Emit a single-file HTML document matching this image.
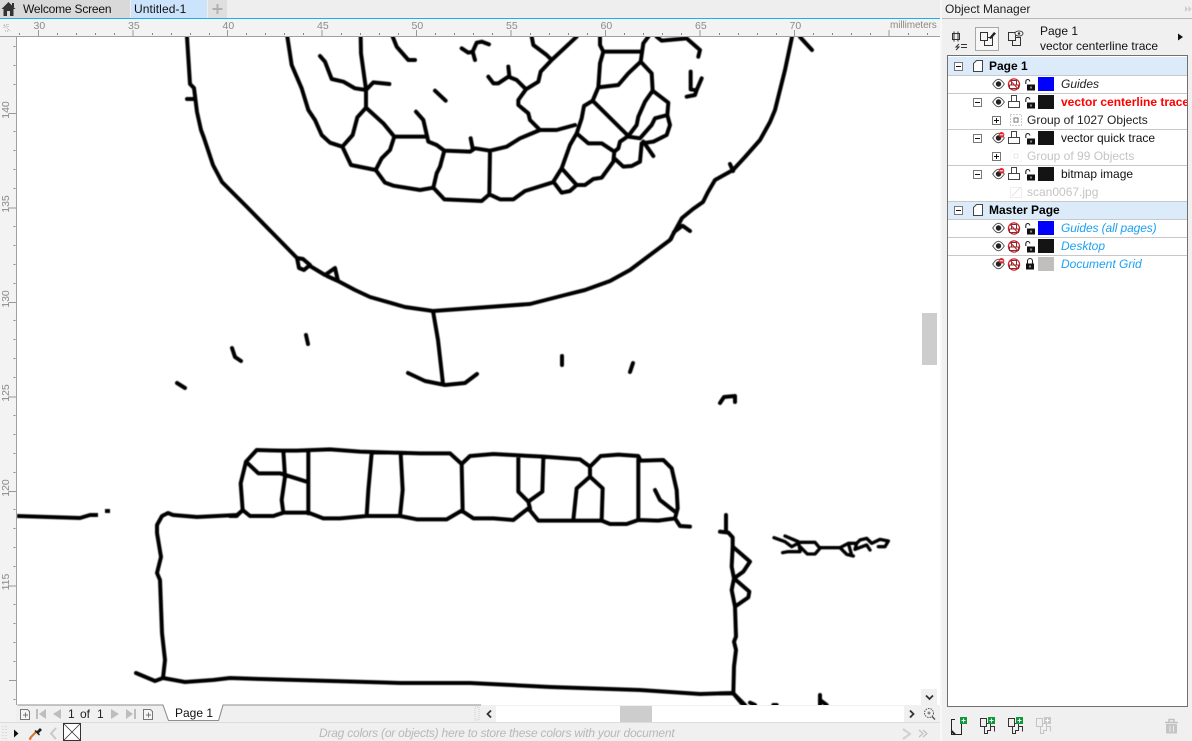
<!DOCTYPE html>
<html><head><meta charset="utf-8"><style>
html,body{margin:0;padding:0}
body{width:1192px;height:741px;overflow:hidden;background:#f0f0f0;position:relative;font:12px "Liberation Sans",sans-serif;color:#111}
.a{position:absolute;white-space:nowrap}
.t{position:absolute;white-space:nowrap;line-height:16px;height:16px}
.l{position:absolute;left:948px;width:239px;height:1px;background:#c8c8c8}
svg{position:absolute;left:0;top:0}
.rh{position:absolute;font-size:10.500px;color:#8a8a8a;top:20px;line-height:12px}
.rv{position:absolute;font-size:10.500px;color:#8a8a8a;left:-4px;width:20px;text-align:center;transform:rotate(-90deg);line-height:12px}
</style></head><body>
<!-- tab strip -->
<div class="a" style="left:0;top:0;width:942px;height:18px;background:#eeeeee"></div>
<div class="a" style="left:0;top:0;width:130px;height:18px;background:#d9d9d9"></div>
<div class="a" style="left:131px;top:0;width:76px;height:18px;background:#cbe3fb"></div>
<div class="a" style="left:208px;top:0;width:19px;height:18px;background:#dfdfdf"></div>
<div class="a" style="left:0;top:18px;width:942px;height:1px;background:#19aeee"></div>
<div class="t" style="left:23px;top:1px;letter-spacing:-.2px">Welcome Screen</div>
<div class="t" style="left:134px;top:1px;letter-spacing:.1px">Untitled-1</div>
<!-- rulers -->
<div class="a" style="left:0;top:19px;width:940px;height:17px;background:#f3f3f3"></div>
<div class="a" style="left:0;top:36px;width:940px;height:1px;background:#a0a0a0"></div>
<div class="a" style="left:16px;top:36px;width:1px;height:669px;background:#a0a0a0"></div>
<div class="a" style="left:0;top:37px;width:16px;height:685px;background:#f3f3f3"></div>
<div class="rh" style="left:33.500px">30</div><div class="rh" style="left:128px">35</div><div class="rh" style="left:222.500px">40</div><div class="rh" style="left:317px">45</div><div class="rh" style="left:411.500px">50</div><div class="rh" style="left:506px">55</div><div class="rh" style="left:600.500px">60</div><div class="rh" style="left:695px">65</div><div class="rh" style="left:789.500px">70</div>
<div class="rv" style="top:104px">140</div><div class="rv" style="top:198px">135</div><div class="rv" style="top:293px">130</div><div class="rv" style="top:387px">125</div><div class="rv" style="top:482px">120</div><div class="rv" style="top:576px">115</div>
<div class="a" style="left:890px;top:20px;font-size:10px;line-height:12px;color:#8f8a80;letter-spacing:-.1px">millimeters</div>
<!-- canvas -->
<div class="a" style="left:17px;top:37px;width:923px;height:668px;background:#fff"></div>

<svg width="1192" height="741" viewBox="0 0 1192 741" fill="none">
<defs>
<clipPath id="c"><rect x="17" y="37" width="904" height="668"/></clipPath>
<filter id="b" x="-2%" y="-2%" width="104%" height="104%"><feGaussianBlur stdDeviation="0.45"/></filter>
<g id="eye"><path d="M.7 6C3 2.500 5 1.200 6.500 1.200S10 2.500 12.300 6C10 9.500 8 10.800 6.500 10.800S3 9.500 .7 6Z" stroke="#555" fill="#fff"/><circle cx="6.500" cy="6" r="2.700" fill="#222"/></g>
<g id="eyeoff"><use href="#eye"/><circle cx="9.500" cy="2.800" r="2.800" fill="#e0202a"/><rect x="7.700" y="2.300" width="3.600" height="1" fill="#fff"/></g>
<g id="pr"><path d="M3.500 6.500V.5H8.500V6.500M.5 6.500H11.500V12.500H.5Z" stroke="#444" fill="#fff"/></g>
<g id="prno"><circle cx="6" cy="6.500" r="5.600" stroke="#d0202a" stroke-width="1.200"/><path d="M3.500 6.500V2.500H8.500V6.500M1.500 7H10.500V10.500H1.500Z" stroke="#7a3030"/><path d="M2.200 2.500L9.800 10.500" stroke="#d0202a" stroke-width="1.200"/></g>
<g id="lk"><path d="M.8 5V2.500A2 2 0 0 1 4.800 2.500" stroke="#222" stroke-width="1.100"/><rect x="2" y="5.500" width="8" height="6" fill="#111"/><rect x="5.500" y="7.500" width="1" height="2" fill="#fff"/></g>
<g id="lkc"><path d="M2.500 5.500V3A2.500 2.500 0 0 1 7.500 3V5.500" stroke="#222" stroke-width="1.100"/><rect x="1" y="5.500" width="8" height="6" fill="#111"/><rect x="4.500" y="7.500" width="1" height="2" fill="#fff"/></g>
<g id="minus"><rect x=".5" y=".5" width="8" height="8" stroke="#777" fill="#fff"/><path d="M2 4.500H7" stroke="#111"/></g>
<g id="plus"><rect x=".5" y=".5" width="8" height="8" stroke="#777" fill="#fff"/><path d="M2 4.500H7M4.500 2V7" stroke="#111"/></g>
<g id="pg"><path d="M3.500 .5H9.500V11.500H.5V3.500Z" stroke="#444" fill="#fff"/></g>
<g id="pgs"><path d="M.5 .5H7.500V8.500H.5ZM7.500 5.500H12.500V13.500H4.500V8.500" stroke="#333"/></g>
<g id="gplus"><rect width="7" height="7" fill="#0c9a3c"/><path d="M1.500 3.500H5.500M3.500 1.500V5.500" stroke="#fff"/></g>
</defs>

<!-- ruler ticks -->
<path d="M38.500 30V36M133 30V36M227.500 30V36M322 30V36M416.500 30V36M511 30V36M605.500 30V36M700 30V36M794.500 30V36M889 30V36" stroke="#999"/>
<path d="M19 34H20M57 34H58M76 34H77M95 34H96M114 34H115M152 34H153M171 34H172M190 34H191M209 34H210M246 34H247M265 34H266M284 34H285M303 34H304M341 34H342M360 34H361M379 34H380M398 34H399M435 34H436M454 34H455M473 34H474M492 34H493M530 34H531M549 34H550M568 34H569M587 34H588M624 34H625M643 34H644M662 34H663M681 34H682M719 34H720M738 34H739M757 34H758M776 34H777M813 34H814M832 34H833M851 34H852M870 34H871M908 34H909M927 34H928" stroke="#888" stroke-width="2"/>
<path d="M9 113.500H16M9 208H16M9 302.500H16M9 397H16M9 491.500H16M9 586H16M9 680.500H16" stroke="#999"/>
<path d="M14.500 46V47M14.500 65V66M14.500 84V85M14.500 131V132M14.500 150V151M14.500 169V170M14.500 188V189M14.500 226V227M14.500 245V246M14.500 264V265M14.500 283V284M14.500 320V321M14.500 339V340M14.500 358V359M14.500 377V378M14.500 415V416M14.500 434V435M14.500 453V454M14.500 472V473M14.500 509V510M14.500 528V529M14.500 547V548M14.500 566V567M14.500 604V605M14.500 623V624M14.500 642V643M14.500 661V662M14.500 699V700" stroke="#888" stroke-width="2"/>
<path d="M4 25L10 31M4 25H8M4 25V29M8 24V27M5 31H8" stroke="#aaa" stroke-dasharray="1 1"/>

<!-- home -->
<path d="M1.500 9L8.500 2L15.500 9H13.500V16H10V11H7V16H3.500V9Z" fill="#333"/><rect x="12" y="3" width="2" height="4" fill="#333"/>
<path d="M217.500 4V14M212.500 9H222.500" stroke="#b0b0b0" stroke-width="2"/>

<!-- drawing -->
<g clip-path="url(#c)"><g filter="url(#b)" stroke="#000" stroke-width="4" stroke-linejoin="round" stroke-linecap="round">
<path d="M187 37L190 84L194 88L197 112L201 130L204 138L213 165L222 182L247 207L297 258L303 259L310 265L304 270L299 268L297 258M310 266L325 275L335 268L338 281L327 276M338 281L355 290L370 297L405 307L433 311L530 304L565 295L585 290L610 281L630 270L670 240L682 218L693 209L703 202L708 192L715 180L733 170L745 157L760 140L770 122L775 110L785 70L792 37M187 99H195M730 164L733 171M671 239L674 232L682 226M683 226L690 231M800 37L812 50"/>
<path d="M433 311L438 340L442 375L443 384M408 373L425 381L445 385L465 383L477 374M232 348L235 357L241 361M306 335L308 344M177 383L185 388M562 356V365M633 363L630 372M720 403L724 397L735 396L735 402"/>
<path d="M17 516L80 518L90 515L98 515" stroke-linecap="butt"/><path d="M105 511H110" stroke-linecap="butt"/>
<g transform="translate(280 30) scale(.33333)" stroke-width="12">
<path d="M22 20L35 105L65 175L85 240L105 270L125 315L150 338L187 350L213 405L287 420M242 20L243 70L258 178V233L232 262L218 315L187 350M120 78L135 95L155 147L190 155L225 175L258 180L280 157L328 162M258 233L310 280L343 320L330 360L305 385L287 420L315 458L340 467L420 480L460 473M343 320H440M408 245L430 270L445 335L470 345L493 362L570 365L585 355L630 362L680 350L720 325L780 300H830L885 285M493 362L480 410L470 430L460 473L493 508L605 513L628 493M630 362L628 493L660 508H700L735 483L815 458M572 325L578 355M338 20L350 50L385 90H405M545 55L565 68L578 65L585 90M578 65L590 38L605 35L627 43M465 182L497 212M625 140L640 160H655L685 140L710 150L738 178L715 210V225L745 250L750 270L780 300M685 110L688 138M738 178L775 155L782 125L815 90L890 20M755 20L760 45L800 75L815 90M960 20V45L970 65L960 100L955 172L938 212L912 228L905 265L890 310M970 65H1082M1105 20L1090 40L1082 95L1115 130L1118 182L1095 215L1075 260L1070 285L1045 318M1082 95L1045 130L1015 165L955 172M1118 182L1165 218L1162 255L1125 265L1115 285L1080 325L1045 320M938 212L1045 318L1020 335L1015 355L1003 365L965 340H925L890 310M890 310L870 345L845 415L820 455L845 488L870 483L890 465H915L940 447L965 443L1000 395L1003 365M845 415L890 465M1003 385L1030 410L1055 408L1080 395L1085 340L1120 335L1160 315L1170 285L1162 255M1090 335L1120 378M1130 20L1145 32L1220 25L1260 60L1255 80M1232 125V178L1250 180L1265 145M1250 180L1245 195L1220 200"/>
</g>
<g transform="translate(230 440) scale(.33333)" stroke-width="12">
<path d="M0 228H20L38 210L32 130L48 65L80 30L155 32H200L300 28L390 35L570 40H660L695 72L720 48L790 42L940 50L1050 58L1080 80L1112 48L1165 44L1225 48L1232 62L1300 60L1325 85L1340 150L1343 205L1335 235L1350 258L1380 260M48 65L85 100H150L230 125M160 32L165 110L155 180L160 218M235 32V220M38 210L60 228H130L160 218H235L280 235H330L410 228H510L560 238H650L695 212L730 235H790L850 240L895 205L925 242H1115L1140 252H1190L1225 240L1285 242L1335 235M425 40L415 150L410 228M512 40L518 150L510 228M695 72L698 212M865 50V155L895 185L937 155L940 55M895 185L900 205M1080 80V110L1040 145L1030 240M1080 110L1118 145L1115 240M1225 58V240M1275 150L1290 180L1335 215"/>
</g>
<g transform="translate(720 510) scale(.33333)" stroke-width="12">
<path d="M18 15V65M0 65L25 68L38 82V110L90 155L70 185L42 205L35 170L38 110M42 205L88 245L85 262L45 290L35 240L42 205M45 290L48 380L42 395L48 420L42 470L40 550H0M40 550L65 580M90 578L105 585M160 585H170M300 555V585M300 570L320 585"/>
<path stroke-width="10" d="M162 83L195 95L215 110L240 97H285L300 115L285 132H262L240 110V125H205L188 128M195 78L235 95L240 120M300 113H360L385 100H410L420 90L440 85L455 100L480 88L505 93L495 110H475M360 113L380 133L400 138M385 100L395 135M410 100L405 118L440 105L450 120"/>
</g>
<path d="M237 515L197 517L173 515L168 513L162 516L157 525V533L161 557L157 573L160 580L162 633L165 660L163 678L155 681L136 673M163 678L185 682L213 680L230 678L260 679L400 683L470 683L550 687L640 690L700 694L733 693L745 705M237 515L243 510"/>
</g></g>

<!-- right scrollbar -->
<rect x="921" y="37" width="19" height="668" fill="#fff"/>
<rect x="922" y="313" width="15" height="52" fill="#cdcdcd"/>
<rect x="921" y="689" width="16" height="16" fill="#f0f0f0"/>
<path d="M926 695.500L929.500 699L933 695.500" stroke="#333" stroke-width="1.800"/>

<!-- nav bar icons -->
<g stroke="#777"><path d="M20.500 709.500H27.500L29.500 711.500V719.500H20.500Z" fill="#f5f5f5"/><path d="M23 715H28M25.500 712.500V717.500"/><path d="M143.500 709.500H150.500L152.500 711.500V719.500H143.500Z" fill="#f5f5f5"/><path d="M146 715H151M148.500 712.500V717.500"/></g>
<g fill="#bdbdbd"><rect x="36" y="709" width="2" height="10"/><path d="M46 709V719L39 714ZM61 709V719L53 714ZM111 709V719L119 714ZM126 709V719L133 714Z"/><rect x="134" y="709" width="2" height="10"/></g>

<!-- page tab -->
<path d="M17.500 705H163L168.500 720.500H218.500L223 705H481" stroke="#8e8e8e" fill="none"/>
<path d="M163 705L168.500 720.500H218.500L223 705Z" fill="#fff"/>
<path d="M163 705L168.500 720.500H218.500L223 705" stroke="#8e8e8e"/>

<!-- h-scroll -->
<rect x="481" y="706" width="440" height="16" fill="#fff"/>
<rect x="481" y="706" width="15" height="16" fill="#f0f0f0"/>
<rect x="620" y="706" width="32" height="16" fill="#cdcdcd"/>
<rect x="904" y="706" width="17" height="16" fill="#f0f0f0"/>
<path d="M491 710.500L487.500 714L491 717.500" stroke="#333" stroke-width="1.800"/>
<path d="M910 710.500L913.500 714L910 717.500" stroke="#333" stroke-width="1.800"/>
<rect x="475" y="707" width="4" height="13" fill="none" stroke="#ccc" stroke-dasharray="1 1"/>
<circle cx="929" cy="713" r="4.500" stroke="#555" stroke-dasharray="1.500 1"/><path d="M932 716.500L935 719.500" stroke="#555" stroke-width="1.500"/><circle cx="929" cy="713" r="1.500" fill="#888"/>

<!-- palette -->
<rect x="0" y="722" width="942" height="1" fill="#dcdcdc"/>
<path d="M3 726V741M6 726V741" stroke="#c8c8c8" stroke-dasharray="1 2"/>
<path d="M14 729.500V737.500L18.500 733.500Z" fill="#111"/>
<path d="M31 738L29.500 739.500L31 737L37 731" stroke="#e07020" stroke-width="2"/><path d="M36 732L40 728L42 730L38 734Z" fill="#222"/><path d="M35 730.500L39.500 735" stroke="#222" stroke-width="1.500"/>
<path d="M56 728L51 733.500L56 739" stroke="#c8c8c8" stroke-width="2"/>
<rect x="63.500" y="723.500" width="17" height="17" fill="#fff" stroke="#333"/><path d="M64 724L80 740M80 724L64 740" stroke="#333" stroke-width=".8"/>
<path d="M903 729L910 734L903 739" stroke="#d0d0d0" stroke-width="2"/>
<path d="M919 730L923 733.500L919 737M923 730L927 733.500L923 737" stroke="#c0c0c0" stroke-width="1.200"/>

<!-- docker -->
<rect x="940" y="0" width="2" height="741" fill="#f7f7f7"/>
<rect x="942" y="18" width="250" height="1" fill="#b8b8b8"/>
<path d="M1185 6V12L1188 9ZM1188.500 6V12L1191.500 9Z" fill="#ccc"/>
<rect x="947.500" y="55.500" width="240" height="651" fill="#fff" stroke="#707070"/>
<rect x="948" y="57" width="239" height="18" fill="#dcebf9"/>
<rect x="948" y="202" width="239" height="17" fill="#dcebf9"/>
<!-- toolbar -->
<path d="M952.500 33.500H959.500V39.500H952.500ZM954 31.500V41.500M958 31.500V41.500" stroke="#333"/>
<path d="M959 44L956 47H959L956 50" stroke="#333"/><path d="M961 44.500H967M961 47.500H967" stroke="#333"/>
<rect x="975.500" y="27.500" width="23" height="23" fill="#f7f7f7" stroke="#a8a8a8"/>
<use href="#pgs" x="980" y="32"/><path d="M989 38L994 32L996 33.500L991 39Z" fill="#222"/>
<use href="#pgs" x="1008" y="32"/><ellipse cx="1019" cy="33.500" rx="4" ry="2.500" stroke="#444" fill="#fff"/><circle cx="1019" cy="33.500" r="1.300" fill="#333"/>
<path d="M1178 33.500V40.500L1183 37Z" fill="#111"/>

<!-- rows: page icons -->
<use href="#minus" x="954" y="62"/><use href="#pg" x="973" y="60"/>
<use href="#minus" x="954" y="206"/><use href="#pg" x="973" y="204"/>
<!-- Guides -->
<use href="#eye" x="992" y="78"/><use href="#prno" x="1008" y="78"/><use href="#lk" x="1025" y="79"/><rect x="1038" y="77" width="16" height="14" fill="#0000ff"/>
<!-- centerline -->
<use href="#minus" x="973" y="98"/><use href="#eye" x="992" y="96"/><use href="#pr" x="1008" y="95"/><use href="#lk" x="1025" y="97"/><rect x="1038" y="95" width="16" height="14" fill="#141414"/>
<use href="#plus" x="992" y="116"/><rect x="1010.500" y="114.500" width="11" height="11" stroke="#999" stroke-dasharray="1 2"/><rect x="1014" y="118" width="4" height="4" stroke="#777"/>
<!-- quick -->
<use href="#minus" x="973" y="134"/><use href="#eyeoff" x="992" y="132"/><use href="#pr" x="1008" y="131"/><use href="#lk" x="1025" y="133"/><rect x="1038" y="131" width="16" height="14" fill="#141414"/>
<use href="#plus" x="992" y="152"/><rect x="1010.500" y="150.500" width="11" height="11" stroke="#f0f0f0" stroke-dasharray="1 2"/><rect x="1014" y="154" width="4" height="4" stroke="#e8e8e8"/>
<!-- bitmap -->
<use href="#minus" x="973" y="170"/><use href="#eyeoff" x="992" y="168"/><use href="#pr" x="1008" y="167"/><use href="#lk" x="1025" y="169"/><rect x="1038" y="167" width="16" height="14" fill="#141414"/>
<path d="M1010.500 187.500H1021.500V197.500H1010.500Z" stroke="#eee"/><path d="M1012 196L1017 191L1021 187" stroke="#e4e4e4"/>
<!-- master -->
<use href="#eye" x="992" y="222"/><use href="#prno" x="1008" y="222"/><use href="#lk" x="1025" y="223"/><rect x="1038" y="221" width="16" height="14" fill="#0000ff"/>
<use href="#eye" x="992" y="240"/><use href="#prno" x="1008" y="240"/><use href="#lk" x="1025" y="241"/><rect x="1038" y="239" width="16" height="14" fill="#141414"/>
<use href="#eyeoff" x="992" y="258"/><use href="#prno" x="1008" y="258"/><use href="#lkc" x="1025" y="258"/><rect x="1038" y="257" width="16" height="14" fill="#c0bfbc"/>

<!-- bottom docker icons -->
<path d="M955 719.500H951.500V734.500H961.500V722" stroke="#222" fill="none"/><path d="M951.500 731L955 734.500" stroke="#222" stroke-width="2"/>
<use href="#gplus" x="960" y="717"/>
<g stroke="#333"><path d="M980.500 718.500H986.500V726.500H980.500ZM986.500 723.500H990.500V730.500H987.500V733.500H984.500V726.500M990.500 726.500H994.500V731.500"/></g>
<use href="#gplus" x="988" y="717"/>
<g stroke="#333"><path d="M1008.500 718.500H1014.500V726.500H1008.500ZM1014.500 723.500H1018.500V730.500H1015.500V733.500H1012.500V726.500M1018.500 726.500H1022.500V731.500"/></g>
<use href="#gplus" x="1016" y="717"/>
<g stroke="#c4c4c4"><path d="M1036.500 718.500H1042.500V726.500H1036.500ZM1042.500 723.500H1046.500V730.500H1043.500V733.500H1040.500V726.500M1046.500 726.500H1050.500V731.500"/></g>
<rect x="1044" y="717" width="7" height="7" fill="#c8c8c8"/><path d="M1045.500 720.500H1049.500M1047.500 718.500V722.500" stroke="#fff"/>
<path d="M1165 722.500H1178M1169 722V719.500H1174V722" stroke="#c0c0c0" stroke-width="1.500"/><path d="M1166 724H1177V733.500H1166Z" fill="#c4c4c4"/><path d="M1170 725.500V732M1173.500 725.500V732" stroke="#ececec"/>
</svg>

<!-- nav text -->
<div class="t" style="left:68px;top:706px;color:#222">1</div>
<div class="t" style="left:80px;top:706px;color:#222">of</div>
<div class="t" style="left:97px;top:706px;color:#222">1</div>
<div class="t" style="left:175px;top:705px;color:#111">Page 1</div>
<div class="t" style="left:319px;top:725px;font-style:italic;color:#b8b8b8;letter-spacing:-.22px">Drag colors (or objects) here to store these colors with your document</div>

<!-- docker text -->
<div class="t" style="left:945px;top:1px;color:#222">Object Manager</div>
<div class="t" style="left:1040px;top:23px">Page 1</div>
<div class="t" style="left:1040px;top:38px">vector centerline trace</div>
<div class="l" style="top:75px"></div><div class="l" style="top:93px"></div><div class="l" style="top:129px"></div><div class="l" style="top:165px"></div><div class="l" style="top:201px"></div><div class="l" style="top:219px"></div><div class="l" style="top:237px"></div><div class="l" style="top:255px"></div>
<div class="t" style="left:989px;top:58px;font-weight:bold;color:#000">Page 1</div>
<div class="t" style="left:1061px;top:76px;font-style:italic;color:#222">Guides</div>
<div class="t" style="left:1061px;top:94px;width:126px;overflow:hidden;font-weight:bold;color:#ff0000">vector centerline trace</div>
<div class="t" style="left:1027px;top:112px;color:#222">Group of 1027 Objects</div>
<div class="t" style="left:1061px;top:130px;color:#111">vector quick trace</div>
<div class="t" style="left:1027px;top:148px;color:#c4c4c4">Group of 99 Objects</div>
<div class="t" style="left:1061px;top:166px;color:#111">bitmap image</div>
<div class="t" style="left:1027px;top:184px;color:#c4c4c4">scan0067.jpg</div>
<div class="t" style="left:989px;top:202px;font-weight:bold;color:#000">Master Page</div>
<div class="t" style="left:1061px;top:220px;font-style:italic;color:#1ba1f2;letter-spacing:-.1px">Guides (all pages)</div>
<div class="t" style="left:1061px;top:238px;font-style:italic;color:#1ba1f2">Desktop</div>
<div class="t" style="left:1061px;top:256px;font-style:italic;color:#1ba1f2">Document Grid</div>
</body></html>
